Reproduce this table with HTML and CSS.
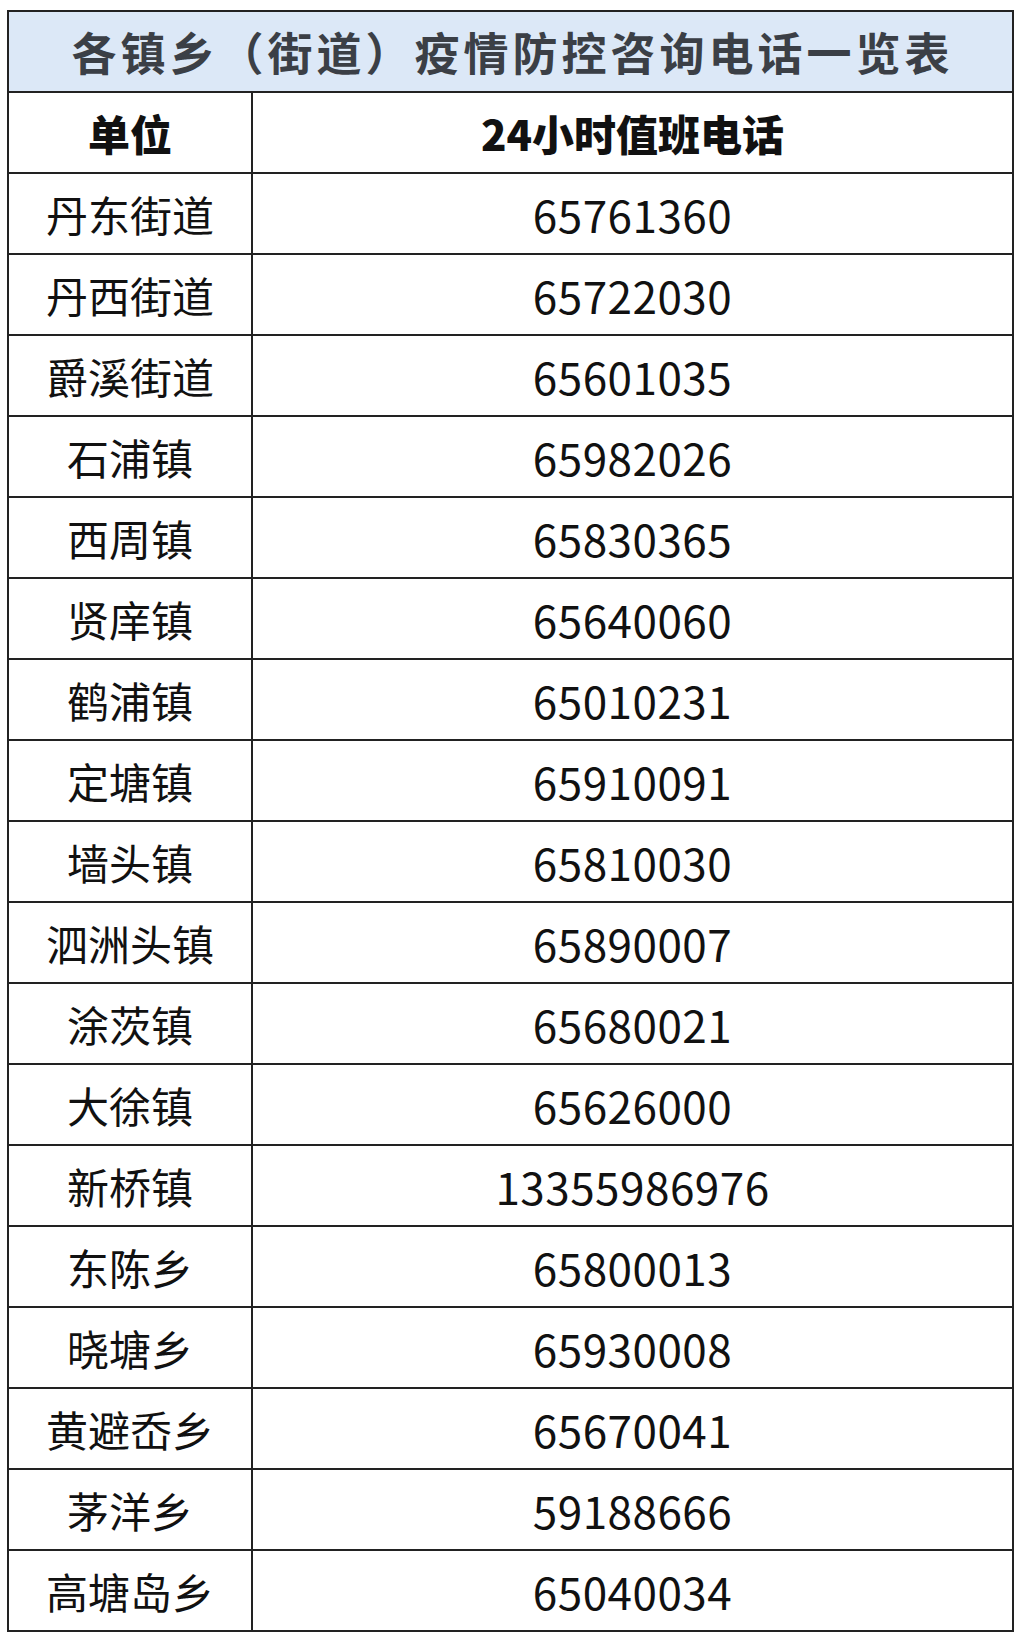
FILE: index.html
```html
<!DOCTYPE html>
<html lang="zh-CN">
<head>
<meta charset="utf-8">
<title>各镇乡（街道）疫情防控咨询电话一览表</title>
<link rel="stylesheet" href="styles.css">
</head>
<body>
<table class="phone-table">
  <colgroup><col class="c-unit"><col class="c-phone"></colgroup>
  <thead>
    <tr class="title-row"><th colspan="2" class="title">各镇乡（街道）疫情防控咨询电话一览表</th></tr>
    <tr class="head-row"><th class="col-unit">单位</th><th class="col-phone">24小时值班电话</th></tr>
  </thead>
  <tbody>
    <tr><td class="unit">丹东街道</td><td class="phone">65761360</td></tr>
    <tr><td class="unit">丹西街道</td><td class="phone">65722030</td></tr>
    <tr><td class="unit">爵溪街道</td><td class="phone">65601035</td></tr>
    <tr><td class="unit">石浦镇</td><td class="phone">65982026</td></tr>
    <tr><td class="unit">西周镇</td><td class="phone">65830365</td></tr>
    <tr><td class="unit">贤庠镇</td><td class="phone">65640060</td></tr>
    <tr><td class="unit">鹤浦镇</td><td class="phone">65010231</td></tr>
    <tr><td class="unit">定塘镇</td><td class="phone">65910091</td></tr>
    <tr><td class="unit">墙头镇</td><td class="phone">65810030</td></tr>
    <tr><td class="unit">泗洲头镇</td><td class="phone">65890007</td></tr>
    <tr><td class="unit">涂茨镇</td><td class="phone">65680021</td></tr>
    <tr><td class="unit">大徐镇</td><td class="phone">65626000</td></tr>
    <tr><td class="unit">新桥镇</td><td class="phone">13355986976</td></tr>
    <tr><td class="unit">东陈乡</td><td class="phone">65800013</td></tr>
    <tr><td class="unit">晓塘乡</td><td class="phone">65930008</td></tr>
    <tr><td class="unit">黄避岙乡</td><td class="phone">65670041</td></tr>
    <tr><td class="unit">茅洋乡</td><td class="phone">59188666</td></tr>
    <tr><td class="unit">高塘岛乡</td><td class="phone">65040034</td></tr>
  </tbody>
</table>
</body>
</html>
```

FILE: styles.css
```css
html, body {
  margin: 0;
  padding: 0;
  background: #ffffff;
}

body {
  padding: 10px 5px 0 7px;
  font-family: "Noto Sans CJK SC", "Noto Sans", sans-serif;
  color: #111111;
}

.phone-table {
  width: 1007px;
  border-collapse: collapse;
  table-layout: fixed;
}

.c-unit {
  width: 244px;
}

.phone-table th,
.phone-table td {
  border: 2px solid #222222;
  padding: 0;
  height: 79px;
  text-align: center;
  vertical-align: middle;
  line-height: 1;
}

.title {
  background: #dce8f7;
  color: #3b3f46;
  font-size: 45px;
  font-weight: 700;
  letter-spacing: 4px;
  text-indent: 4px;
}

.col-unit,
.col-phone {
  font-size: 42px;
  font-weight: 900;
  color: #111111;
}

.unit {
  font-size: 42px;
  font-weight: 400;
}

.phone {
  font-size: 44px;
  font-weight: 400;
  letter-spacing: 0.5px;
}
```
